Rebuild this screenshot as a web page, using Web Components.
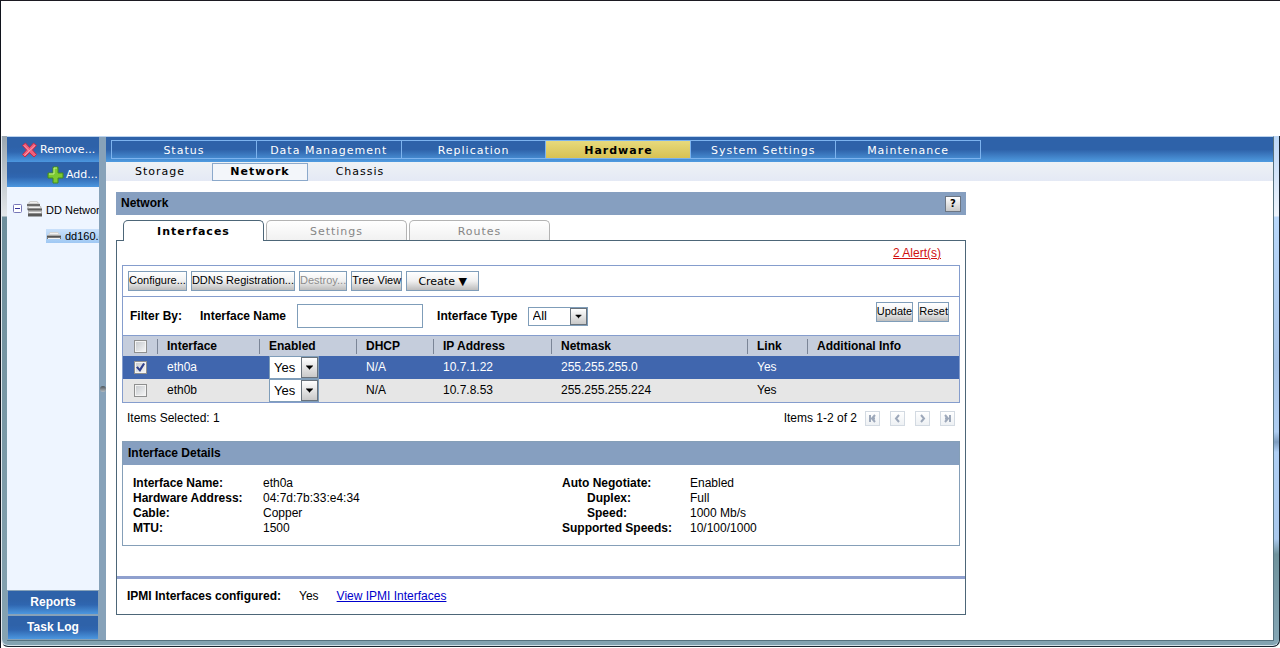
<!DOCTYPE html>
<html lang="en">
<head>
<meta charset="utf-8">
<title>Network</title>
<style>
    html, body {
        height: 100%;
        margin: 0;
        background: white;
    }

    body {
        font: 12px/15px "Liberation Sans", Arial, sans-serif;
        color: black;
    }
</style>
</head>
<body>
<app-window>
    <side-panel slot="side"></side-panel>
    <main-nav></main-nav>
    <sub-nav></sub-nav>
    <page-panel heading="Network">
        <alert-link>2 Alert(s)</alert-link>
        <interface-box>
            <tool-bar></tool-bar>
            <filter-bar></filter-bar>
            <interface-table></interface-table>
        </interface-box>
        <items-pager></items-pager>
        <interface-details></interface-details>
        <ipmi-status></ipmi-status>
    </page-panel>
</app-window>

<script>
class BaseElement extends HTMLElement {
    constructor() {
        super();
        this.shadowDOM = this.attachShadow({ mode: 'open' });
    }

    connectedCallback() {
        this.render();
    }
}

const buttonStyle = `
    button {
        box-sizing: border-box;
        height: 20px;
        padding: 0 0 2px;
        border: 1px solid #7f9db9;
        background: linear-gradient(#ffffff, #f0f0f0 50%, #bdbdbd);
        font: 11px/15px "Liberation Sans", Arial, sans-serif;
        color: black;
        white-space: nowrap;
    }

    button:disabled {
        color: #8c8c8c;
    }
`;

const selectStyle = `
    .select {
        position: relative;
        display: inline-flex;
    }

    select {
        appearance: none;
        box-sizing: border-box;
        width: 100%;
        margin: 0;
        padding: 0 0 0 4px;
        border: 1px solid #7f9db9;
        border-radius: 0;
        background: white;
        font: 13px/16px "Liberation Sans", Arial, sans-serif;
        color: black;
    }

    .select svg {
        position: absolute;
        top: 1px;
        right: 1px;
        width: 17px;
        height: calc(100% - 2px);
        box-sizing: border-box;
        border: 1px solid #69727b;
        background: linear-gradient(#ffffff, #c9c9c9);
        pointer-events: none;
    }
`;

const arrow = `<svg viewBox="0 0 15 18" aria-hidden="true"><path d="M4 7h7v1h-1v1h-1v1h-1v1h-1v-1h-1v-1h-1v-1h-1z"/></svg>`;

class AppWindow extends BaseElement {
    render() {
        this.shadowDOM.innerHTML = `
        <style>
            :host {
                display: flex;
                flex-direction: column;
                box-sizing: border-box;
                min-height: 100vh;
                border-top: 1px solid #1c1a22;
                border-left: 1px solid #10131c;
                background: white;
            }

            header {
                height: 135px;
            }

            .frame {
                flex: 1;
                display: flex;
                padding: 0 5px 5px 5px;
                margin-bottom: 1px;
                border: 1px solid #17232e;
                border-width: 0 1px 1px 1px;
                border-left-color: #e4eaf0;
                border-radius: 0 0 7px 7px;
                background:
                    linear-gradient(#9aa6b0, #e3e7ea 80px, #6d8e9c 81px, #86a3b1) left / 6px 100% no-repeat,
                    linear-gradient(#bcd7f6, #eef4fc 80px, #b9d8fb 81px, #a5c3e6 45%, #aecdf1 58%, #7d9cbe 60%, #afcff4 62%, #a9c8ec 79%, #6f929c 82%, #86a7b6) right / 6px 100% no-repeat,
                    #83a3b1;
                box-shadow: inset 0 -1px #d5e3ea;
            }

            .client {
                flex: 1;
                display: flex;
                min-width: 0;
                border: 1px solid #56727f;
                border-width: 0 1px 1px 0;
                border-top: 1px solid #bcd3ee;
                background: white;
            }

            .splitter {
                width: 7px;
                display: flex;
                align-items: center;
                justify-content: center;
                background: #87a2b9;
            }

            .splitter i {
                width: 6px;
                height: 6px;
                border-radius: 3px;
                background: linear-gradient(#4c5358, #b4bcc2);
            }

            main {
                flex: 1;
                min-width: 0;
            }
        </style>
        <header></header>
        <div class="frame">
            <div class="client">
                <slot name="side"></slot>
                <div class="splitter"><i></i></div>
                <main><slot></slot></main>
            </div>
        </div>
        `;
    }
}

class SidePanel extends BaseElement {
    render() {
        this.shadowDOM.innerHTML = `
        <style>
            :host {
                width: 92px;
                display: flex;
                flex-direction: column;
                overflow: hidden;
                background: #eef5ff;
            }

            button {
                display: flex;
                align-items: center;
                border: 0;
                padding: 0;
                color: white;
                background: linear-gradient(#2e62a9 40%, #2f66b0 60%, #4c97df);
                white-space: nowrap;
            }

            .top {
                height: 25px;
                gap: 2px;
                font: 11px/15px "DejaVu Sans", Verdana, sans-serif;
            }

            .remove { padding-left: 14px; }
            .add { padding-left: 40px; }

            .top svg {
                flex: none;
                width: 17px;
                height: 18px;
            }

            ul {
                flex: 1;
                margin: 0;
                padding: 12px 0 0 6px;
                list-style: none;
                font-size: 11px;
                white-space: nowrap;
            }

            li {
                display: flex;
                align-items: center;
                height: 20px;
                gap: 3px;
            }

            li svg { flex: none; }
            li span { padding-top: 2px; }

            .leaf {
                height: 14px;
                margin: 10px 0 0 33px;
                background: linear-gradient(#c9e0fa, #9fc8f3);
            }

            .leaf span { padding-top: 0; }

            .bottom {
                justify-content: center;
                height: 25px;
                border: 1px solid #87a2b9;
                font: bold 12px/15px "Liberation Sans", Arial, sans-serif;
            }
        </style>
        <button class="top remove">
            <svg viewBox="0 0 17 18"><path d="M1.500 4.500L4.500 2 8.500 6.500 12.500 2 15.500 4.500 11.500 9 15.500 13.500 13 16 8.500 11.500 4 16 1.500 13.500 5.500 9z" fill="#ef5f7b" stroke="#c22a48" stroke-linejoin="round"/><path d="M3 4.500L8.500 10M14 4.500L3.500 14.500" fill="none" stroke="#ff9fb0"/></svg>
            Remove...
        </button>
        <button class="top add">
            <svg viewBox="0 0 17 18"><path d="M6 1h5v6h5v5h-5v5H6v-5H1V7h5z" fill="#7cc931" stroke="#438c1c"/><path d="M7 2h3M7 2v6H2" fill="none" stroke="#c3ef8c"/></svg>
            Add...
        </button>
        <ul>
            <li>
                <svg width="10" height="10" viewBox="0 0 10 10"><rect x=".5" y=".5" width="8" height="8" rx="1" fill="#fff" stroke="#7777b8"/><path d="M2 4.500h5" stroke="#333399"/></svg>
                <svg width="17" height="18" viewBox="0 0 17 18">
                    <path d="M1 4l3-3h7l3 3v2H1z" fill="#cfcfcf"/>
                    <path d="M1 4h13v2H1z" fill="#6a6a6a"/>
                    <path d="M1 6h14l1 3v2H2z" fill="#c4c4c4"/>
                    <path d="M1 8.500h15v2H2z" fill="#5c5c5c"/>
                    <path d="M2 11h14v5H2z" fill="#b9b9b9"/>
                    <path d="M2 13.500h14v3H2z" fill="#5a5a5a"/>
                    <path d="M4 2.500h7M3 7.500h11M3 12.500h12" stroke="#f0f0f0"/>
                </svg>
                <span>DD Network</span>
            </li>
            <li class="leaf">
                <svg width="16" height="10" viewBox="0 0 16 10"><path d="M1 5l3-4h8l3 4z" fill="#d5d5d5"/><path d="M1 4.500h14V8H1z" fill="#777"/><path d="M1 5.500h14" stroke="#555"/><path d="M4 2.500h8M2 7.500h12" stroke="#f2f2f2"/></svg>
                <span>dd160.e</span>
            </li>
        </ul>
        <button class="bottom">Reports</button>
        <button class="bottom">Task Log</button>
        `;
    }
}

class MainNav extends BaseElement {
    render() {
        const items = ['Status', 'Data Management', 'Replication', 'Hardware', 'System Settings', 'Maintenance'];
        this.shadowDOM.innerHTML = `
        <style>
            :host {
                display: block;
                padding: 3px 5px;
                background: linear-gradient(#2e62a9 50%, #4f9be0);
                font: 11px/18px "DejaVu Sans", Verdana, sans-serif;
                letter-spacing: 1px;
            }

            nav {
                display: flex;
                max-width: 870px;
                box-sizing: border-box;
                border: 1px solid #7db3ee;
                border-left-width: 0;
            }

            a {
                flex: 1;
                box-sizing: border-box;
                height: 17px;
                padding-top: 1px;
                border-left: 1px solid #7db3ee;
                color: white;
                text-align: center;
                text-decoration: none;
                white-space: nowrap;
            }

            .active {
                background: linear-gradient(#e7da7c, #d8c153);
                color: black;
                font-weight: bold;
            }
        </style>
        <nav>${items.map(item => `<a href="#"${item === 'Hardware' ? ' class="active"' : ''}>${item}</a>`).join('')}</nav>
        `;
    }
}

class SubNav extends BaseElement {
    render() {
        this.shadowDOM.innerHTML = `
        <style>
            :host {
                display: block;
                padding: 1px 6px 0;
                background: linear-gradient(#eef2f5, #e4e9f5);
                font: 11px/16px "DejaVu Sans", Verdana, sans-serif;
                letter-spacing: 1px;
            }

            nav {
                display: flex;
                gap: 4px;
            }

            a {
                box-sizing: border-box;
                width: 96px;
                border: 1px solid transparent;
                color: black;
                text-align: center;
                text-decoration: none;
            }

            .active {
                border-color: #8ba9cb;
                background: #f3f6fa;
                font-weight: bold;
            }
        </style>
        <nav>
            <a href="#">Storage</a>
            <a href="#" class="active">Network</a>
            <a href="#">Chassis</a>
        </nav>
        `;
    }
}

class PagePanel extends BaseElement {
    render() {
        this.shadowDOM.innerHTML = `
        <style>
            :host {
                display: block;
                max-width: 850px;
                padding: 11px 10px;
            }

            h1 {
                display: flex;
                align-items: center;
                justify-content: space-between;
                height: 23px;
                margin: 0 0 5px;
                padding: 0 5px;
                background: #869fc0;
                font-size: 12px;
            }

            h1 button {
                width: 16px;
                height: 16px;
                padding: 0;
                border: 1px solid #6c7684;
                background: linear-gradient(#fff, #c8c8c8);
                font: bold 10px/12px "DejaVu Sans", Verdana, sans-serif;
                color: black;
            }

            .tabs {
                display: flex;
                gap: 2px;
                padding-left: 7px;
                font: 11px/19px "DejaVu Sans", Verdana, sans-serif;
                letter-spacing: 1px;
            }

            .tabs button {
                box-sizing: border-box;
                width: 141px;
                height: 20px;
                padding: 1px 0 0;
                border: 1px solid #b4b4b4;
                border-bottom: 0;
                border-radius: 5px 5px 0 0;
                background: linear-gradient(#fff, #f1f1f1);
                font: inherit;
                letter-spacing: inherit;
                color: #868686;
            }

            .tabs .active {
                height: 21px;
                margin-bottom: -1px;
                border-color: #4d6678;
                background: white;
                color: black;
                font-weight: bold;
                z-index: 1;
            }

            section {
                border: 1px solid #4d6678;
            }
        </style>
        <h1>${this.getAttribute('heading')} <button>?</button></h1>
        <div class="tabs">
            <button class="active">Interfaces</button>
            <button>Settings</button>
            <button>Routes</button>
        </div>
        <section><slot></slot></section>
        `;
    }
}

class AlertLink extends BaseElement {
    render() {
        this.shadowDOM.innerHTML = `
        <style>
            :host {
                display: block;
                padding: 5px 24px 4px;
                text-align: right;
            }

            a { color: #d01010; }
        </style>
        <a href="#"><slot></slot></a>
        `;
    }
}

class InterfaceBox extends BaseElement {
    render() {
        this.shadowDOM.innerHTML = `
        <style>
            :host {
                display: block;
                margin: 0 5px;
                border: 1px solid #859dcd;
            }
        </style>
        <slot></slot>
        `;
    }
}

class ToolBar extends BaseElement {
    render() {
        this.shadowDOM.innerHTML = `
        <style>
            :host {
                display: flex;
                gap: 4px;
                padding: 5px;
                border-bottom: 1px solid #859dcd;
            }

            ${buttonStyle}

            .create {
                width: 73px;
                padding: 0;
                font-family: "DejaVu Sans", Verdana, sans-serif;
            }
        </style>
        <button>Configure...</button>
        <button>DDNS Registration...</button>
        <button disabled>Destroy...</button>
        <button>Tree View</button>
        <button class="create">Create ▼</button>
        `;
    }
}

class FilterBar extends BaseElement {
    render() {
        this.shadowDOM.innerHTML = `
        <style>
            :host {
                display: flex;
                align-items: center;
                height: 38px;
                padding: 0 10px 0 7px;
                font-weight: bold;
            }

            ${buttonStyle}
            ${selectStyle}

            .title { width: 70px; }

            input {
                box-sizing: border-box;
                width: 126px;
                height: 24px;
                margin: 0 14px 0 11px;
                border: 1px solid #7f9db9;
            }

            .select {
                width: 60px;
                margin-left: 10px;
            }

            select { height: 19px; }

            .buttons {
                display: flex;
                gap: 5px;
                margin: 0 0 8px auto;
            }
        </style>
        <span class="title">Filter By:</span>
        <label for="name">Interface Name</label>
        <input id="name" type="text">
        <label for="type">Interface Type</label>
        <span class="select"><select id="type"><option>All</option></select>${arrow}</span>
        <div class="buttons">
            <button>Update</button>
            <button>Reset</button>
        </div>
        `;
    }
}

class InterfaceTable extends BaseElement {
    render() {
        const rows = [
            { name: 'eth0a', ip: '10.7.1.22', mask: '255.255.255.0', selected: true },
            { name: 'eth0b', ip: '10.7.8.53', mask: '255.255.255.224', selected: false }
        ];
        const heads = ['Interface', 'Enabled', 'DHCP', 'IP Address', 'Netmask', 'Link', 'Additional Info'];

        this.shadowDOM.innerHTML = `
        <style>
            :host {
                display: block;
                border-top: 1px solid #859dcd;
            }

            ${selectStyle}

            table {
                width: 100%;
                border-collapse: collapse;
                table-layout: fixed;
            }

            th, td {
                height: 23px;
                padding: 0 0 0 10px;
                text-align: left;
            }

            th {
                height: 20px;
                background: linear-gradient(#7b8597, #7b8597) left / 1px 15px no-repeat;
            }

            th:first-child { background: none; }
            thead tr { background: #c5cddc; }
            tbody tr { background: #e6e6e6; }

            tbody .selected {
                background: #4066ae;
                color: white;
            }

            .select {
                width: 50px;
                vertical-align: top;
            }

            select { height: 23px; }

            input {
                appearance: none;
                display: block;
                box-sizing: border-box;
                width: 13px;
                height: 13px;
                margin: 0 0 0 1px;
                border: 1px solid #8e8f8f;
                outline: 1px solid #f4f4f4;
                outline-offset: -2px;
                background: linear-gradient(135deg, #c3c7cb, #f8f8f8);
            }

            input:checked::after {
                content: "";
                display: block;
                width: 9px;
                height: 9px;
                margin: 1px;
                background: #30418e;
                clip-path: polygon(0 50%, 20% 35%, 40% 62%, 80% 0, 100% 12%, 45% 100%);
            }
        </style>
        <table>
            <colgroup>
                <col style="width: 34px"><col style="width: 102px"><col style="width: 97px">
                <col style="width: 77px"><col style="width: 118px"><col style="width: 196px">
                <col style="width: 60px"><col>
            </colgroup>
            <thead>
                <tr>
                    <th><input type="checkbox" aria-label="Select all"></th>
                    ${heads.map(head => `<th>${head}</th>`).join('')}
                </tr>
            </thead>
            <tbody>
                ${rows.map(row => `
                <tr${row.selected ? ' class="selected"' : ''}>
                    <td><input type="checkbox" aria-label="${row.name}"${row.selected ? ' checked' : ''}></td>
                    <td>${row.name}</td>
                    <td><span class="select"><select aria-label="Enabled"><option>Yes</option></select>${arrow}</span></td>
                    <td>N/A</td>
                    <td>${row.ip}</td>
                    <td>${row.mask}</td>
                    <td>Yes</td>
                    <td></td>
                </tr>`).join('')}
            </tbody>
        </table>
        `;
    }
}

class ItemsPager extends BaseElement {
    render() {
        const pages = {
            First: 'M4 3v7M9 3L6 6.500l3 3.500M6 6.500h3',
            Previous: 'M8 3L5 6.500l3 3.500',
            Next: 'M5 3l3 3.500L5 10',
            Last: 'M9 3v7M4 3l3 3.500L4 10M4 6.500h3'
        };
        this.shadowDOM.innerHTML = `
        <style>
            :host {
                display: flex;
                align-items: center;
                gap: 8px;
                padding: 8px 10px 15px;
            }

            .selected { margin-right: auto; }

            .pages {
                display: flex;
                gap: 10px;
            }

            button {
                width: 15px;
                height: 15px;
                padding: 0;
                border: 1px solid #d3dae2;
                background: linear-gradient(#fff, #eef1f4);
            }

            svg {
                display: block;
                fill: none;
                stroke: #9da8ba;
                stroke-width: 2;
            }
        </style>
        <span class="selected">Items Selected: 1</span>
        <span>Items 1-2 of 2</span>
        <div class="pages">
            ${Object.keys(pages).map(page => `<button aria-label="${page} page"><svg width="13" height="13" viewBox="0 0 13 13"><path d="${pages[page]}"/></svg></button>`).join('')}
        </div>
        `;
    }
}

class InterfaceDetails extends BaseElement {
    render() {
        this.shadowDOM.innerHTML = `
        <style>
            :host {
                display: block;
                margin: 0 5px 30px;
                border: 1px solid #859fb8;
            }

            h2 {
                margin: 0;
                padding: 4px 5px;
                background: #869fc0;
                font-size: 12px;
            }

            .lists {
                display: grid;
                grid-template-columns: 429px 1fr;
                padding: 11px 10px 9px;
            }

            dl {
                display: grid;
                grid-template-columns: 130px 1fr;
                align-content: start;
                margin: 0;
            }

            .right { grid-template-columns: 128px 1fr; }
            dt { font-weight: bold; }
            dd { margin: 0; }
            .indent { padding-left: 25px; }
        </style>
        <h2>Interface Details</h2>
        <div class="lists">
            <dl>
                <dt>Interface Name:</dt><dd>eth0a</dd>
                <dt>Hardware Address:</dt><dd>04:7d:7b:33:e4:34</dd>
                <dt>Cable:</dt><dd>Copper</dd>
                <dt>MTU:</dt><dd>1500</dd>
            </dl>
            <dl class="right">
                <dt>Auto Negotiate:</dt><dd>Enabled</dd>
                <dt class="indent">Duplex:</dt><dd>Full</dd>
                <dt class="indent">Speed:</dt><dd>1000 Mb/s</dd>
                <dt>Supported Speeds:</dt><dd>10/100/1000</dd>
            </dl>
        </div>
        `;
    }
}

class IpmiStatus extends BaseElement {
    render() {
        this.shadowDOM.innerHTML = `
        <style>
            :host {
                display: flex;
                gap: 18px;
                padding: 10px;
                border-top: 3px solid #8fa0ce;
            }

            a { color: #0000cc; }
        </style>
        <b>IPMI Interfaces configured:</b>
        <span>Yes</span>
        <a href="#">View IPMI Interfaces</a>
        `;
    }
}

customElements.define('app-window', AppWindow);
customElements.define('side-panel', SidePanel);
customElements.define('main-nav', MainNav);
customElements.define('sub-nav', SubNav);
customElements.define('page-panel', PagePanel);
customElements.define('alert-link', AlertLink);
customElements.define('interface-box', InterfaceBox);
customElements.define('tool-bar', ToolBar);
customElements.define('filter-bar', FilterBar);
customElements.define('interface-table', InterfaceTable);
customElements.define('items-pager', ItemsPager);
customElements.define('interface-details', InterfaceDetails);
customElements.define('ipmi-status', IpmiStatus);
</script>
</body>
</html>
